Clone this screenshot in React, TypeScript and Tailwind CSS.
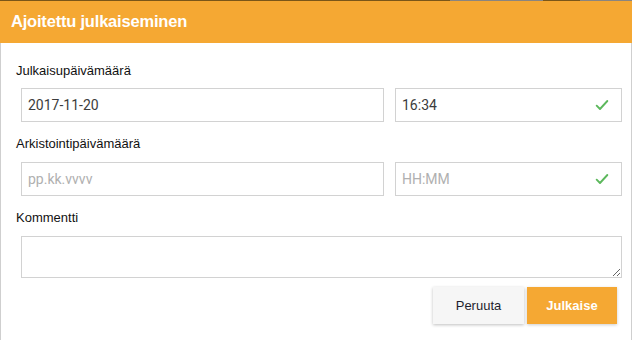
import React from "react";

function Check() {
  return (
    <svg width="16" height="16" viewBox="0 0 24 24" fill="none" stroke="#5cb85c" strokeWidth="2.8" strokeLinecap="round" strokeLinejoin="round">
      <path d="M4 13l5 5L20 6" />
    </svg>
  );
}

export default function App() {
  const label = "text-[13px] text-[#111] leading-none";
  const input =
    "h-[34px] border border-[#d2d2d2] bg-white flex items-center px-[6px] text-[14px] font-['Roboto',sans-serif]";
  return (
    <div className="w-[632px] h-[340px] bg-white flex flex-col font-['Liberation_Sans',sans-serif] overflow-hidden">
      <div className="flex h-px shrink-0">
        <div className="w-[450px] bg-[#7a5618]" />
        <div className="w-[93px] bg-[#8a8580]" />
        <div className="w-[37px] bg-[#7a5618]" />
        <div className="flex-1 bg-[#8a8580]" />
      </div>
      <div className="h-[42px] shrink-0 bg-[#f5a833] flex items-center pl-[11px] pb-[2px]">
        <span className="text-white font-bold text-[16.5px] tracking-[-0.2px]">Ajoitettu julkaiseminen</span>
      </div>
      <div className="flex-1 border-l border-r border-[#cfcfcf] flex flex-col pl-[15px] pr-[9px]">
        <div className={label + " mt-[21px]"}>Julkaisupäivämäärä</div>
        <div className="flex gap-[11px] ml-[5px] mt-[11px]">
          <div className={input + " w-[363px] text-[#3c3c3c]"}>2017-11-20</div>
          <div className={input + " flex-1 justify-between text-[#3c3c3c] pr-[11px]"}>
            <span>16:34</span>
            <Check />
          </div>
        </div>
        <div className={label + " mt-[15px]"}>Arkistointipäivämäärä</div>
        <div className="flex gap-[11px] ml-[5px] mt-[12px]">
          <div className={input + " w-[363px] text-[#b0b0b0]"}>pp.kk.vvvv</div>
          <div className={input + " flex-1 justify-between text-[#b0b0b0] pr-[11px]"}>
            <span>HH:MM</span>
            <Check />
          </div>
        </div>
        <div className={label + " mt-[15px]"}>Kommentti</div>
        <textarea className="block ml-[5px] mt-[12px] h-[42px] border border-[#d2d2d2] resize-y outline-none" />
        <div className="flex justify-end gap-[3px] mt-[9px] pr-[5px]">
          <button className="w-[91px] h-[37px] bg-[#f6f6f6] text-[13px] text-[#1e1e2e] shadow-[0_1px_3px_rgba(0,0,0,0.25)]">Peruuta</button>
          <button className="w-[90px] h-[37px] bg-[#f5a833] text-[13px] font-bold text-white shadow-[0_1px_3px_rgba(0,0,0,0.2)]">Julkaise</button>
        </div>
      </div>
    </div>
  );
}
